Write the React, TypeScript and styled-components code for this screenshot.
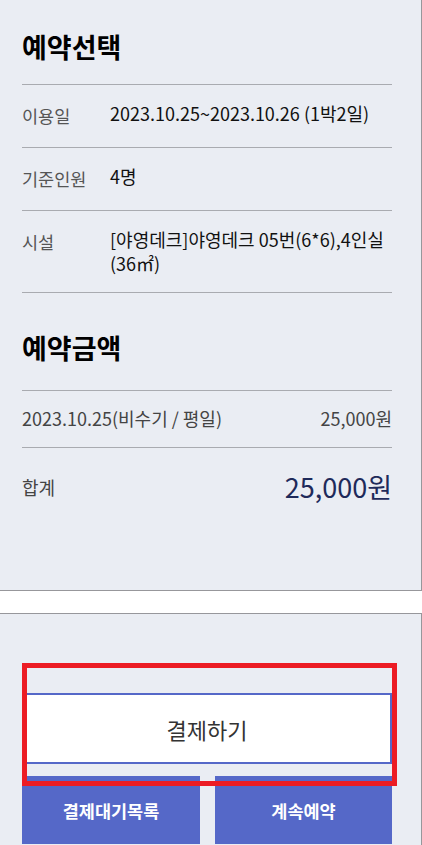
import styled, { createGlobalStyle } from 'styled-components'

const Global = createGlobalStyle`
body {
  margin: 0;
  background: #fff;
  font-family: "Noto Sans CJK KR", "Noto Sans", sans-serif;
}
* { box-sizing: border-box; }
`

const Page = styled.div`
width: 422px;
height: 845px;
overflow: hidden;
`

const Panel = styled.section<{ $top?: boolean }>`
position: relative;
background: #eaedf3;
border-right: 1px solid #97979b;
border-bottom: 1px solid #97979b;
border-top: ${(p) => (p.$top ? '1px solid #97979b' : 'none')};
padding: 0 29px 0 22px;
`

const Summary = styled(Panel)`
padding-top: 29px;
padding-bottom: 88px;
`

const Actions = styled(Panel)`
margin-top: 22px;
padding-top: 79px;
height: 300px;
`

const Title = styled.h2<{ $space: number; $top?: number }>`
margin: ${(p) => p.$top ?? 0}px 0 0;
padding-bottom: ${(p) => p.$space}px;
border-bottom: 1px solid #a9abb0;
font-size: 27px;
line-height: 36px;
font-weight: 700;
color: #000;
`

const Row = styled.div`
display: flex;
padding: 17px 0;
border-bottom: 1px solid #a9abb0;
`

const Label = styled.div`
width: 88px;
flex-shrink: 0;
font-size: 17.5px;
line-height: 28px;
color: #555;
`

const Value = styled.div`
flex: 1;
font-size: 18px;
line-height: 23.5px;
color: #111;
`

const PriceRow = styled.div<{ $last?: boolean }>`
display: flex;
justify-content: space-between;
align-items: center;
padding: ${(p) => (p.$last ? '24px 0 0' : '16px 0 17px')};
border-bottom: ${(p) => (p.$last ? 'none' : '1px solid #a9abb0')};
font-size: 18px;
line-height: 23px;
color: #444;
`

const Total = styled.span`
font-size: 27px;
line-height: 30px;
color: #1e2a5a;
`

const ButtonArea = styled.div`
position: relative;
display: flex;
flex-direction: column;
gap: 12px;
`

const PayButton = styled.button`
height: 71px;
border: 2px solid #5568c8;
background: #fff;
font-family: inherit;
font-size: 22px;
color: #333;
`

const SubButtons = styled.div`
display: grid;
grid-template-columns: 178px 177px;
justify-content: space-between;
`

const SubButton = styled.button`
height: 68px;
border: none;
background: #5568c8;
color: #fff;
font-family: inherit;
font-size: 17.5px;
font-weight: 700;
`

const Highlight = styled.div`
position: absolute;
left: 0;
top: -30px;
width: 375px;
height: 123px;
border: 5px solid #ec1c24;
pointer-events: none;
`

const info = [
  { label: '이용일', value: '2023.10.25~2023.10.26 (1박2일)' },
  { label: '기준인원', value: '4명' },
  { label: '시설', value: '[야영데크]야영데크 05번(6*6),4인실 (36㎡)' },
]

export default function App() {
  return (
    <Page>
      <Global />
      <Summary>
        <Title $space={19}>예약선택</Title>
        {info.map((item) => (
          <Row key={item.label}>
            <Label>{item.label}</Label>
            <Value>{item.value}</Value>
          </Row>
        ))}
        <Title $top={37} $space={24}>예약금액</Title>
        <PriceRow>
          <span>2023.10.25(비수기 / 평일)</span>
          <span>25,000원</span>
        </PriceRow>
        <PriceRow $last>
          <span>합계</span>
          <Total>25,000원</Total>
        </PriceRow>
      </Summary>
      <Actions $top>
        <ButtonArea>
          <PayButton>결제하기</PayButton>
          <SubButtons>
            <SubButton>결제대기목록</SubButton>
            <SubButton>계속예약</SubButton>
          </SubButtons>
          <Highlight />
        </ButtonArea>
      </Actions>
    </Page>
  )
}
